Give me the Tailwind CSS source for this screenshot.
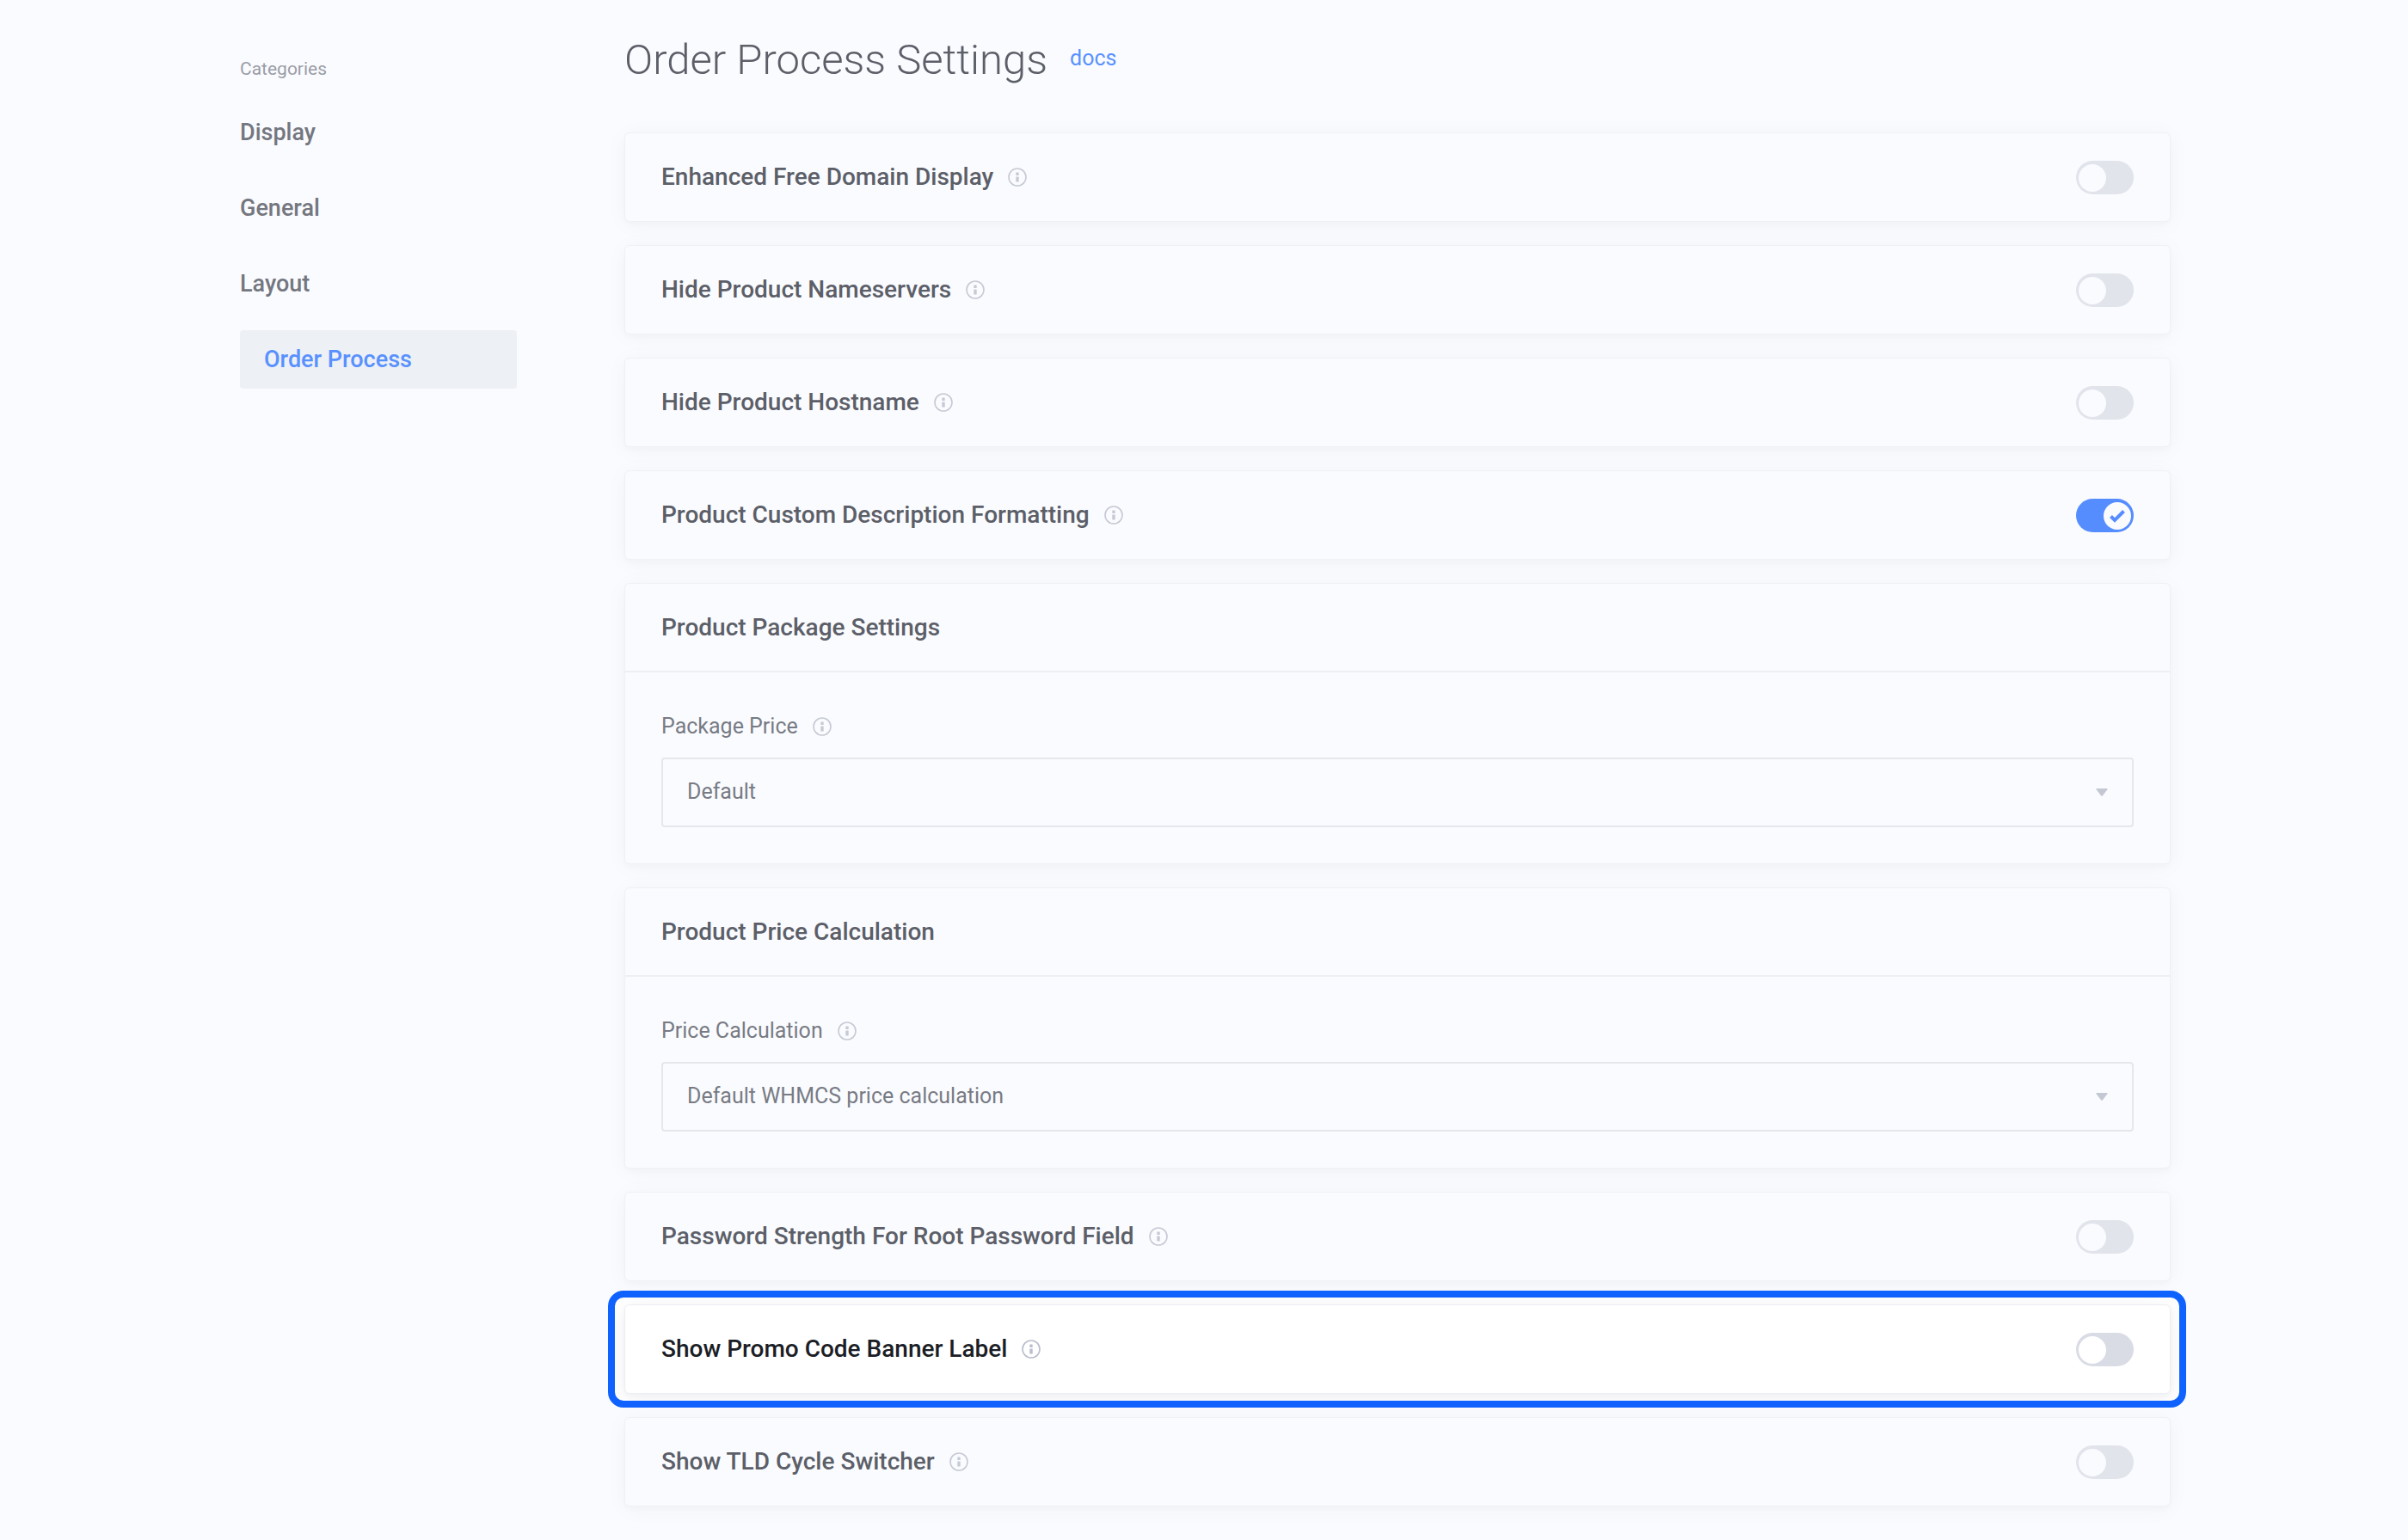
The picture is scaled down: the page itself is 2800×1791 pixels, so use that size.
<!DOCTYPE html>
<html lang="en">
<head>
<meta charset="utf-8">
<meta name="viewport" content="width=device-width, initial-scale=1">
<title>Order Process Settings</title>
<script src="https://cdn.jsdelivr.net/npm/@tailwindcss/browser@4"></script>
</head>
<body class="min-h-screen bg-[#fafbff] font-[Roboto,sans-serif] text-[#5c5f68]">
<svg class="hidden" aria-hidden="true">
  <symbol id="info" viewBox="0 0 22 22">
    <circle cx="11" cy="11" r="10" fill="none" stroke="currentColor" stroke-width="1.6"/>
    <rect x="9.3" y="5.6" width="3.4" height="3.4" rx=".5" fill="currentColor"/>
    <rect x="9.3" y="10.6" width="3.4" height="6" rx=".5" fill="currentColor"/>
  </symbol>
  <symbol id="check" viewBox="0 0 20 16">
    <path d="M2.5 8.5 7 13 17.500 2.500" fill="none" stroke="currentColor" stroke-width="4"/>
  </symbol>
  <symbol id="caret" viewBox="0 0 14 9">
    <path d="M1 0h12q1 0 .6 1L8 8.300q-1 1-2 0L.4 1Q0 0 1 0z" fill="currentColor"/>
  </symbol>
</svg>

<div class="flex items-start gap-[125px] pt-[42px] pr-[276px] pb-[38px] pl-[279px]">
  <nav class="w-[322px] shrink-0 pt-6" aria-label="Categories">
    <h2 class="mb-[26px] text-[21px] leading-7 text-[#9a9da7]">Categories</h2>
    <ul class="flex flex-col gap-5 text-[27px] font-medium text-[#74777f]">
      <li><a href="#display" class="flex h-[68px] items-center">Display</a></li>
      <li><a href="#general" class="flex h-[68px] items-center">General</a></li>
      <li><a href="#layout" class="flex h-[68px] items-center">Layout</a></li>
      <li><a href="#order" aria-current="page" class="flex h-[68px] items-center rounded-[4px] bg-[#edf0f4] px-7 text-[#5891ff]">Order Process</a></li>
    </ul>
  </nav>

  <main class="min-w-0 flex-1">
    <header class="mb-14 flex h-14 items-start gap-[26px]">
      <h1 class="text-[49px] leading-14 font-light">Order Process Settings</h1>
      <a href="#docs" class="text-[25px] leading-[52px] text-[#5891ff]">docs</a>
    </header>

    <form class="flex flex-col gap-[27px]">
      <section class="flex h-[104px] items-center rounded-[6px] border border-[#f0f1f5] bg-[#fafbff] px-[42px] shadow-[0_3px_26px_rgba(30,40,60,0.04),0_3px_6px_rgba(30,40,60,0.02)]">
        <label for="free-domain" class="text-[28px] font-medium">Enhanced Free Domain Display</label>
        <svg class="ml-[17px] size-[22px] text-[#c6cad4]"><use href="#info"/></svg>
        <input id="free-domain" type="checkbox" class="ml-auto h-[39px] w-[67px] appearance-none rounded-full bg-[#e1e4eb] pt-1 pl-[3px] before:block before:size-8 before:rounded-full before:bg-[#fafbff]">
      </section>

      <section class="flex h-[104px] items-center rounded-[6px] border border-[#f0f1f5] bg-[#fafbff] px-[42px] shadow-[0_3px_26px_rgba(30,40,60,0.04),0_3px_6px_rgba(30,40,60,0.02)]">
        <label for="nameservers" class="text-[28px] font-medium">Hide Product Nameservers</label>
        <svg class="ml-[17px] size-[22px] text-[#c6cad4]"><use href="#info"/></svg>
        <input id="nameservers" type="checkbox" class="ml-auto h-[39px] w-[67px] appearance-none rounded-full bg-[#e1e4eb] pt-1 pl-[3px] before:block before:size-8 before:rounded-full before:bg-[#fafbff]">
      </section>

      <section class="flex h-[104px] items-center rounded-[6px] border border-[#f0f1f5] bg-[#fafbff] px-[42px] shadow-[0_3px_26px_rgba(30,40,60,0.04),0_3px_6px_rgba(30,40,60,0.02)]">
        <label for="hostname" class="text-[28px] font-medium">Hide Product Hostname</label>
        <svg class="ml-[17px] size-[22px] text-[#c6cad4]"><use href="#info"/></svg>
        <input id="hostname" type="checkbox" class="ml-auto h-[39px] w-[67px] appearance-none rounded-full bg-[#e1e4eb] pt-1 pl-[3px] before:block before:size-8 before:rounded-full before:bg-[#fafbff]">
      </section>

      <section class="flex h-[104px] items-center rounded-[6px] border border-[#f0f1f5] bg-[#fafbff] px-[42px] shadow-[0_3px_26px_rgba(30,40,60,0.04),0_3px_6px_rgba(30,40,60,0.02)]">
        <label for="formatting" class="text-[28px] font-medium">Product Custom Description Formatting</label>
        <svg class="ml-[17px] size-[22px] text-[#c6cad4]"><use href="#info"/></svg>
        <span class="relative ml-auto flex">
          <input id="formatting" type="checkbox" checked class="h-[39px] w-[67px] appearance-none rounded-full bg-[#558dff] pt-1 pl-8 before:block before:size-8 before:rounded-full before:bg-[#fafbff]">
          <svg class="pointer-events-none absolute top-3 right-[9px] h-4 w-5 text-[#558dff]"><use href="#check"/></svg>
        </span>
      </section>

      <section class="rounded-[6px] border border-[#f0f1f5] bg-[#fafbff] shadow-[0_3px_26px_rgba(30,40,60,0.04),0_3px_6px_rgba(30,40,60,0.02)]">
        <h2 class="flex h-[103px] items-center border-b-2 border-[#eeeff3] px-[42px] text-[28px] font-medium">Product Package Settings</h2>
        <div class="px-[42px] pt-[43px] pb-[42px]">
          <div class="mb-4 flex h-10 items-center text-[25px] text-[#787b84]">
            <label for="package-price">Package Price</label>
            <svg class="ml-[17px] size-[22px] text-[#c6cad4]"><use href="#info"/></svg>
          </div>
          <div class="relative">
            <select id="package-price" class="block h-[81px] w-full appearance-none rounded-[4px] border-2 border-[#e5e7ec] px-7 pb-0.5 text-[25px] text-[#787b84]">
              <option>Default</option>
            </select>
            <svg class="pointer-events-none absolute top-9 right-[30px] h-[9px] w-[14px] text-[#c4c8d2]"><use href="#caret"/></svg>
          </div>
        </div>
      </section>

      <section class="rounded-[6px] border border-[#f0f1f5] bg-[#fafbff] shadow-[0_3px_26px_rgba(30,40,60,0.04),0_3px_6px_rgba(30,40,60,0.02)]">
        <h2 class="flex h-[103px] items-center border-b-2 border-[#eeeff3] px-[42px] text-[28px] font-medium">Product Price Calculation</h2>
        <div class="px-[42px] pt-[43px] pb-[42px]">
          <div class="mb-4 flex h-10 items-center text-[25px] text-[#787b84]">
            <label for="price-calculation">Price Calculation</label>
            <svg class="ml-[17px] size-[22px] text-[#c6cad4]"><use href="#info"/></svg>
          </div>
          <div class="relative">
            <select id="price-calculation" class="block h-[81px] w-full appearance-none rounded-[4px] border-2 border-[#e5e7ec] px-7 pb-0.5 text-[25px] text-[#787b84]">
              <option>Default WHMCS price calculation</option>
            </select>
            <svg class="pointer-events-none absolute top-9 right-[30px] h-[9px] w-[14px] text-[#c4c8d2]"><use href="#caret"/></svg>
          </div>
        </div>
      </section>

      <section class="flex h-[104px] items-center rounded-[6px] border border-[#f0f1f5] bg-[#fafbff] px-[42px] shadow-[0_3px_26px_rgba(30,40,60,0.04),0_3px_6px_rgba(30,40,60,0.02)]">
        <label for="password" class="text-[28px] font-medium">Password Strength For Root Password Field</label>
        <svg class="ml-[17px] size-[22px] text-[#c6cad4]"><use href="#info"/></svg>
        <input id="password" type="checkbox" class="ml-auto h-[39px] w-[67px] appearance-none rounded-full bg-[#e1e4eb] pt-1 pl-[3px] before:block before:size-8 before:rounded-full before:bg-[#fafbff]">
      </section>

      <!-- Focused setting: white card inside a blue frame -->
      <div class="relative z-10 -my-4 -mr-[18px] -ml-[19px] overflow-hidden rounded-[18px] border-8 border-[#0f62fe] bg-white py-2 pr-[10px] pl-[11px]">
        <section class="flex h-[104px] items-center rounded-[6px] border border-[#eceef3] bg-white px-[42px] shadow-[0_3px_26px_rgba(30,40,80,0.06),0_3px_6px_rgba(30,40,80,0.04)]">
          <label for="promo" class="text-[28px] font-medium text-[#1b1e26]">Show Promo Code Banner Label</label>
          <svg class="ml-[17px] size-[22px] text-[#b9becb]"><use href="#info"/></svg>
          <input id="promo" type="checkbox" class="ml-auto h-[39px] w-[67px] appearance-none rounded-full bg-[#d9dce5] pt-1 pl-[3px] before:block before:size-8 before:rounded-full before:bg-white">
        </section>
      </div>

      <section class="flex h-[104px] items-center rounded-[6px] border border-[#f0f1f5] bg-[#fafbff] px-[42px] shadow-[0_3px_26px_rgba(30,40,60,0.04),0_3px_6px_rgba(30,40,60,0.02)]">
        <label for="tld" class="text-[28px] font-medium">Show TLD Cycle Switcher</label>
        <svg class="ml-[17px] size-[22px] text-[#c6cad4]"><use href="#info"/></svg>
        <input id="tld" type="checkbox" class="ml-auto h-[39px] w-[67px] appearance-none rounded-full bg-[#e1e4eb] pt-1 pl-[3px] before:block before:size-8 before:rounded-full before:bg-[#fafbff]">
      </section>
    </form>
  </main>
</div>
</body>
</html>
